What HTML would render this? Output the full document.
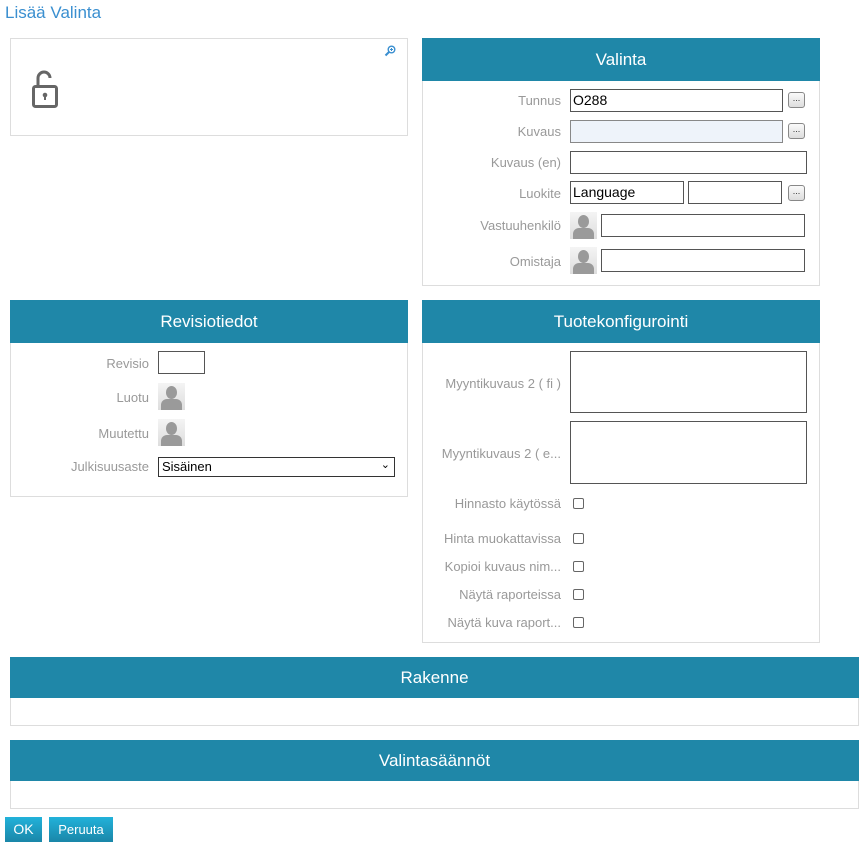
<!DOCTYPE html>
<html><head><meta charset="utf-8"><style>
*{box-sizing:border-box}
body{margin:0;width:865px;height:851px;background:#fff;font-family:"Liberation Sans",sans-serif;font-size:13px;position:relative;overflow:hidden}
.a{position:absolute}
.panel{position:absolute;border:1px solid #ddd;background:#fff}
.hd{position:absolute;left:-1px;right:-1px;top:-1px;background:#1f87a8;color:#fff;font-size:17px;text-align:center}
.lbl{position:absolute;color:#999;text-align:right;font-size:13px;white-space:nowrap}
.in{position:absolute;border:1px solid #555;background:#fff;font-size:14px;padding:2px 2px;color:#000}
.btn{position:absolute;width:17px;height:16px;border:1px solid #888;border-radius:3px;background:linear-gradient(#fafafa,#ddd);font-size:9px;line-height:10px;text-align:center;color:#333}
.av{position:absolute;width:27px;height:27px;background:linear-gradient(#f4f4f4,#ddd);overflow:hidden}
.av:before{content:"";position:absolute;left:8px;top:3px;width:11px;height:13px;border-radius:50%;background:#9a9a9a}
.av:after{content:"";position:absolute;left:3px;top:16px;width:21px;height:14px;border-radius:6px 6px 0 0;background:#9a9a9a}
.cb{position:absolute;width:11px;height:11px;border:1px solid #666;border-radius:2px;background:#fff}
.ok{position:absolute;background:linear-gradient(#22b2da,#1a86a8);color:#fff;font-size:14px;text-align:center;line-height:25px;height:25px}
</style></head><body>
<div class="a" style="left:5px;top:3px;font-size:17px;color:#3a8fd0">Lisää Valinta</div>

<div class="panel" style="left:10px;top:38px;width:398px;height:98px">
<svg class="a" style="left:373px;top:6px" width="12" height="12" viewBox="0 0 12 12"><circle cx="7.5" cy="4.5" r="3.3" fill="none" stroke="#3a8fd0" stroke-width="1.4"/><path d="M5 7L1.5 10.5" stroke="#3a8fd0" stroke-width="2"/><path d="M7.5 3v3M6 4.5h3" stroke="#3a8fd0" stroke-width="1"/></svg>
<svg class="a" style="left:20px;top:29px" width="28" height="42" viewBox="0 0 28 42"><path d="M7 18V10a6 6 0 0 1 12 0" fill="none" stroke="#666" stroke-width="3"/><rect x="2.5" y="18.5" width="23" height="20" rx="2" fill="none" stroke="#666" stroke-width="3"/><circle cx="14" cy="27" r="2.3" fill="#666"/><rect x="13" y="27" width="2" height="5" fill="#666"/></svg>
</div>

<div class="panel" style="left:422px;top:38px;width:398px;height:248px">
<div class="hd" style="height:43px;line-height:43px">Valinta</div>
</div>
<div class="lbl" style="left:420px;width:141px;top:93px">Tunnus</div>
<div class="in" style="left:570px;top:89px;width:213px;height:23px">O288</div>
<div class="btn" style="left:788px;top:92px">...</div>
<div class="lbl" style="left:420px;width:141px;top:124px">Kuvaus</div>
<div class="in" style="left:570px;top:120px;width:213px;height:23px;background:#eef3fa;border-color:#888"></div>
<div class="btn" style="left:788px;top:123px">...</div>
<div class="lbl" style="left:420px;width:141px;top:155px">Kuvaus (en)</div>
<div class="in" style="left:570px;top:151px;width:237px;height:23px"></div>
<div class="lbl" style="left:420px;width:141px;top:186px">Luokite</div>
<div class="in" style="left:570px;top:181px;width:114px;height:23px">Language</div>
<div class="in" style="left:688px;top:181px;width:94px;height:23px"></div>
<div class="btn" style="left:788px;top:185px">...</div>
<div class="lbl" style="left:420px;width:141px;top:218px">Vastuuhenkilö</div>
<div class="av" style="left:570px;top:212px"></div>
<div class="in" style="left:601px;top:214px;width:204px;height:23px"></div>
<div class="lbl" style="left:420px;width:141px;top:254px">Omistaja</div>
<div class="av" style="left:570px;top:247px"></div>
<div class="in" style="left:601px;top:249px;width:204px;height:23px"></div>

<div class="panel" style="left:10px;top:300px;width:398px;height:197px">
<div class="hd" style="height:43px;line-height:43px">Revisiotiedot</div>
</div>
<div class="lbl" style="left:10px;width:139px;top:356px">Revisio</div>
<div class="in" style="left:158px;top:351px;width:47px;height:23px"></div>
<div class="lbl" style="left:10px;width:139px;top:390px">Luotu</div>
<div class="av" style="left:158px;top:383px"></div>
<div class="lbl" style="left:10px;width:139px;top:426px">Muutettu</div>
<div class="av" style="left:158px;top:419px"></div>
<div class="lbl" style="left:10px;width:139px;top:459px">Julkisuusaste</div>
<div class="in" style="left:158px;top:457px;width:237px;height:20px;font-size:13px;padding:1px 3px;border-color:#333">Sisäinen<span style="position:absolute;right:4px;top:0;font-size:11px">&#8964;</span></div>

<div class="panel" style="left:422px;top:300px;width:398px;height:343px">
<div class="hd" style="height:43px;line-height:43px">Tuotekonfigurointi</div>
</div>
<div class="lbl" style="left:420px;width:141px;top:376px">Myyntikuvaus 2 ( fi )</div>
<div class="in" style="left:570px;top:351px;width:237px;height:62px"></div>
<div class="lbl" style="left:420px;width:141px;top:446px">Myyntikuvaus 2 ( e...</div>
<div class="in" style="left:570px;top:421px;width:237px;height:63px"></div>
<div class="lbl" style="left:420px;width:141px;top:496px">Hinnasto käytössä</div><div class="cb" style="left:573px;top:498px"></div>
<div class="lbl" style="left:420px;width:141px;top:531px">Hinta muokattavissa</div><div class="cb" style="left:573px;top:533px"></div>
<div class="lbl" style="left:420px;width:141px;top:559px">Kopioi kuvaus nim...</div><div class="cb" style="left:573px;top:561px"></div>
<div class="lbl" style="left:420px;width:141px;top:587px">Näytä raporteissa</div><div class="cb" style="left:573px;top:589px"></div>
<div class="lbl" style="left:420px;width:141px;top:615px">Näytä kuva raport...</div><div class="cb" style="left:573px;top:617px"></div>

<div class="panel" style="left:10px;top:657px;width:849px;height:69px">
<div class="hd" style="height:41px;line-height:41px">Rakenne</div>
</div>
<div class="panel" style="left:10px;top:740px;width:849px;height:69px">
<div class="hd" style="height:41px;line-height:41px">Valintasäännöt</div>
</div>
<div class="ok" style="left:5px;top:817px;width:37px">OK</div>
<div class="ok" style="left:49px;top:817px;width:64px;font-size:13px">Peruuta</div>
</body></html>
